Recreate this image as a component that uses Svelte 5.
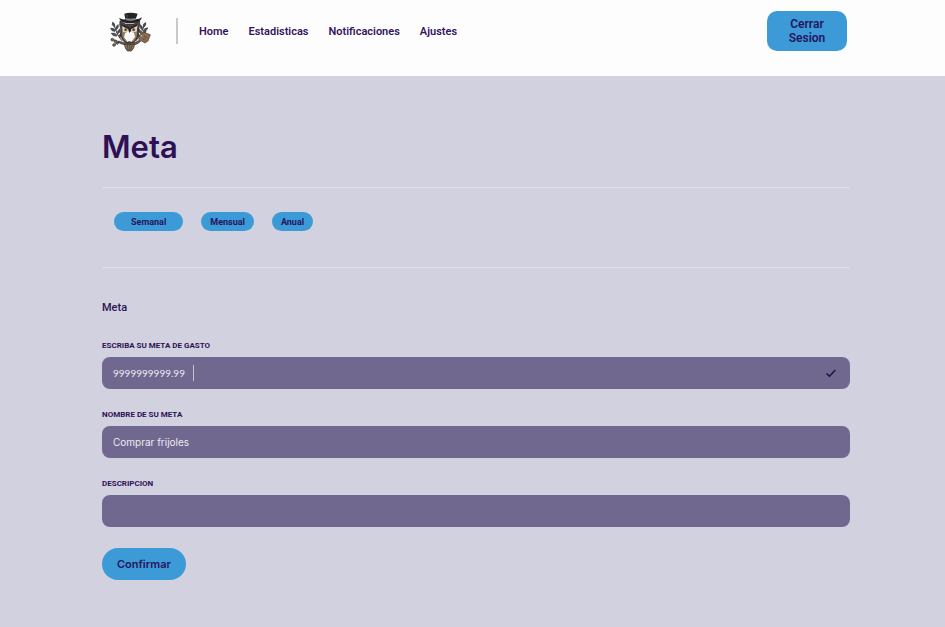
<script>
  const links = ['Home', 'Estadisticas', 'Notificaciones', 'Ajustes'];
  const periods = [
    { name: 'Semanal', wide: true },
    { name: 'Mensual', wide: false },
    { name: 'Anual', wide: false }
  ];
  let amount = $state('9999999999.99');
  let goal = $state('Comprar frijoles');
  let description = $state('');
</script>

<header>
  <a class="logo" href="#home" aria-label="Inicio">
    <svg viewBox="28 22 124 120" width="42" height="40" aria-hidden="true">
      <g fill="none" stroke="#34343a" stroke-width="3" stroke-linecap="round">
        <path d="M66 108C55 96 47 80 42 60M108 108C120 94 128 76 134 60" />
        <path d="M58 113C50 108 44 106 34 104M56 112L40 122" />
      </g>
      <g fill="#4b4c52" stroke="#4b4c52" stroke-width="3">
        <path d="M42 66Q34 60 38 53Q46 56 44 66ZM47 76Q47 64 54 60Q58 70 47 76ZM44 80Q34 80 32 71Q42 69 46 78ZM52 88Q52 77 60 72Q64 82 52 88ZM50 94Q38 96 34 86Q45 83 51 92ZM58 100Q56 90 65 84Q69 94 58 100Z" />
        <path d="M130 66Q128 57 137 54Q140 62 130 68ZM126 75Q116 68 121 60Q129 66 127 75ZM130 78Q134 68 143 70Q141 79 130 80ZM120 85Q110 79 115 70Q123 76 121 85ZM124 88Q129 79 138 80Q135 90 124 90ZM113 97Q104 90 110 81Q118 87 115 97Z" />
      </g>
      <g fill="#806c59" stroke="#302d30" stroke-width="2">
        <circle cx="37" cy="105" r="4" /><circle cx="46" cy="110" r="4" />
        <circle cx="42" cy="121" r="4" /><circle cx="52" cy="116" r="3" />
      </g>
      <path d="M60 48L76 58H101L119 48Q121 62 115 72Q119 96 103 112L88 120L73 112Q57 94 63 74Q57 62 60 48Z" fill="#51453f" stroke="#242327" stroke-width="2" />
      <path d="M68 76Q63 94 75 108L82 112L78 83ZM110 76Q114 94 103 108L94 112L99 82Z" fill="#9a8063" />
      <path d="M66 59L85 67L89 73L94 67L113 58L110 81L90 84L68 81Z" fill="#ded8cf" />
      <path d="M64 57L86 66L89 71L93 66L115 56L111 64L94 73L89 81L84 73L67 65Z" fill="#252328" />
      <circle cx="77" cy="75" r="5" fill="#9b7136" /><circle cx="101" cy="75" r="5" fill="#9b7136" />
      <circle cx="77" cy="75" r="2" fill="#18181b" /><circle cx="101" cy="75" r="2" fill="#18181b" />
      <path d="M76 84L88 79L102 84L105 97L98 106L94 112L88 109L82 112L77 104L72 98Z" fill="#f8f7f5" />
      <path d="M85 77L89 74L94 77L89 85Z" fill="#28262a" />
      <path d="M56 109Q72 117 88 115Q106 117 118 107L122 110Q108 124 88 120Q66 122 54 113Z" fill="#6f5d4d" stroke="#2b292c" stroke-width="2" />
      <path d="M73 119H104L101 130L94 139H82L76 130Z" fill="#8a7055" stroke="#2d2a2c" stroke-width="2" />
      <path d="M82 121L84 137M89 121V138M96 121L93 137" stroke="#453b36" stroke-width="2" />
      <path d="M119 94L130 82L151 90L144 109L135 115L116 104Z" fill="#8b6c50" stroke="#443932" stroke-width="2" />
      <circle cx="124" cy="93" r="2" fill="#efe7dc" />
      <path d="M132 93L139 98L133 104M128 102L134 106" fill="none" stroke="#51402f" stroke-width="2" />
      <path d="M57 39Q65 45 76 44L73 27Q90 22 113 27L107 44Q119 44 126 38Q122 53 103 55H79Q62 53 57 39Z" fill="#232429" />
      <path d="M76 40Q91 44 108 40L107 46Q91 50 77 46Z" fill="#85868a" />
      <path d="M80 29L82 38" stroke="#62636a" stroke-width="2" />
    </svg>
  </a>
  <nav>
    {#each links as link}
      <a href="#{link.toLowerCase()}">{link}</a>
    {/each}
  </nav>
  <button class="logout">Cerrar Sesion</button>
</header>

<main>
  <h1>Meta</h1>
  <div class="periods">
    {#each periods as period}
      <button class:wide={period.wide}>{period.name}</button>
    {/each}
  </div>
  <form onsubmit={(e) => e.preventDefault()}>
    <h2>Meta</h2>
    <label for="amount">Escriba su meta de gasto</label>
    <div class="field">
      <input id="amount" class="amount" bind:value={amount} />
      <span class="caret"></span>
      <svg class="check" viewBox="0 0 12 12" width="12" height="12" aria-hidden="true">
        <path d="M1.5 6.5L4.5 9.3L10.3 3" fill="none" stroke="#1e0f4d" stroke-width="1.5" />
      </svg>
    </div>
    <label for="goal">Nombre de su meta</label>
    <div class="field"><input id="goal" bind:value={goal} /></div>
    <label for="description">Descripcion</label>
    <div class="field"><input id="description" bind:value={description} /></div>
    <button class="confirm">Confirmar</button>
  </form>
</main>

<style>
  :global(body) {
    margin: 0;
    background: #d2d1df;
  }
  header, main {
    box-sizing: border-box;
    color: #2e1155;
    font-family: Roboto, "Liberation Sans", sans-serif;
  }
  button {
    border: 0;
    background: #3c9bd7;
    color: #26135f;
    font-family: inherit;
    font-weight: 700;
    cursor: pointer;
  }
  header {
    display: flex;
    align-items: flex-start;
    height: 76px;
    padding: 11px 98px 0 109px;
    background: #fdfdfd;
  }
  .logo {
    display: flex;
    padding-top: 1px;
  }
  nav {
    display: flex;
    align-items: center;
    gap: 20px;
    height: 26px;
    margin: 7px auto 0 25px;
    padding-left: 21px;
    border-left: 2px solid #c9c9cd;
  }
  nav a {
    color: #35145f;
    font-size: 11px;
    font-weight: 600;
    text-decoration: none;
  }
  .logout {
    width: 80px;
    height: 40px;
    padding: 0 16px;
    border-radius: 10px;
    font-size: 12px;
    font-weight: 600;
    line-height: 14px;
  }
  main {
    padding: 49px 95px 47px 102px;
  }
  h1 {
    margin: 0;
    padding-bottom: 18px;
    border-bottom: 1px solid #dfdfe9;
    font: 600 31px/44px Inter, "Open Sans", sans-serif;
  }
  .periods {
    display: flex;
    gap: 18px;
    padding: 24px 12px 36px;
    border-bottom: 1px solid #dfdfe9;
  }
  .periods button {
    height: 19px;
    padding: 0 9px;
    border-radius: 10px;
    font-size: 9px;
  }
  .periods .wide {
    padding: 0 17px;
  }
  form {
    display: flex;
    flex-direction: column;
    padding-top: 32px;
  }
  h2 {
    margin: 0 0 25px;
    font-size: 11px;
    font-weight: 500;
    line-height: 15px;
  }
  label {
    margin-bottom: 5px;
    font-size: 8px;
    font-weight: 700;
    line-height: 12px;
    text-transform: uppercase;
  }
  .field {
    display: flex;
    align-items: center;
    box-sizing: border-box;
    height: 32px;
    margin-bottom: 20px;
    padding: 0 13px 0 11px;
    border-radius: 8px;
    background: #71688f;
  }
  input {
    flex: 1;
    min-width: 0;
    padding: 0;
    border: 0;
    outline: 0;
    background: none;
    color: #eeecf5;
    font: 400 10px/16px Inter, "Open Sans", sans-serif;
  }
  .amount {
    flex: 0 0 80px;
    font-family: Lato, "Open Sans", sans-serif;
  }
  .caret {
    width: 1px;
    height: 16px;
    background: #c6c1d3;
  }
  .check {
    margin-left: auto;
  }
  .confirm {
    align-self: flex-start;
    height: 32px;
    margin-top: 1px;
    padding: 0 15px;
    border-radius: 16px;
    font: 600 11px/16px Inter, "Open Sans", sans-serif;
  }
</style>
